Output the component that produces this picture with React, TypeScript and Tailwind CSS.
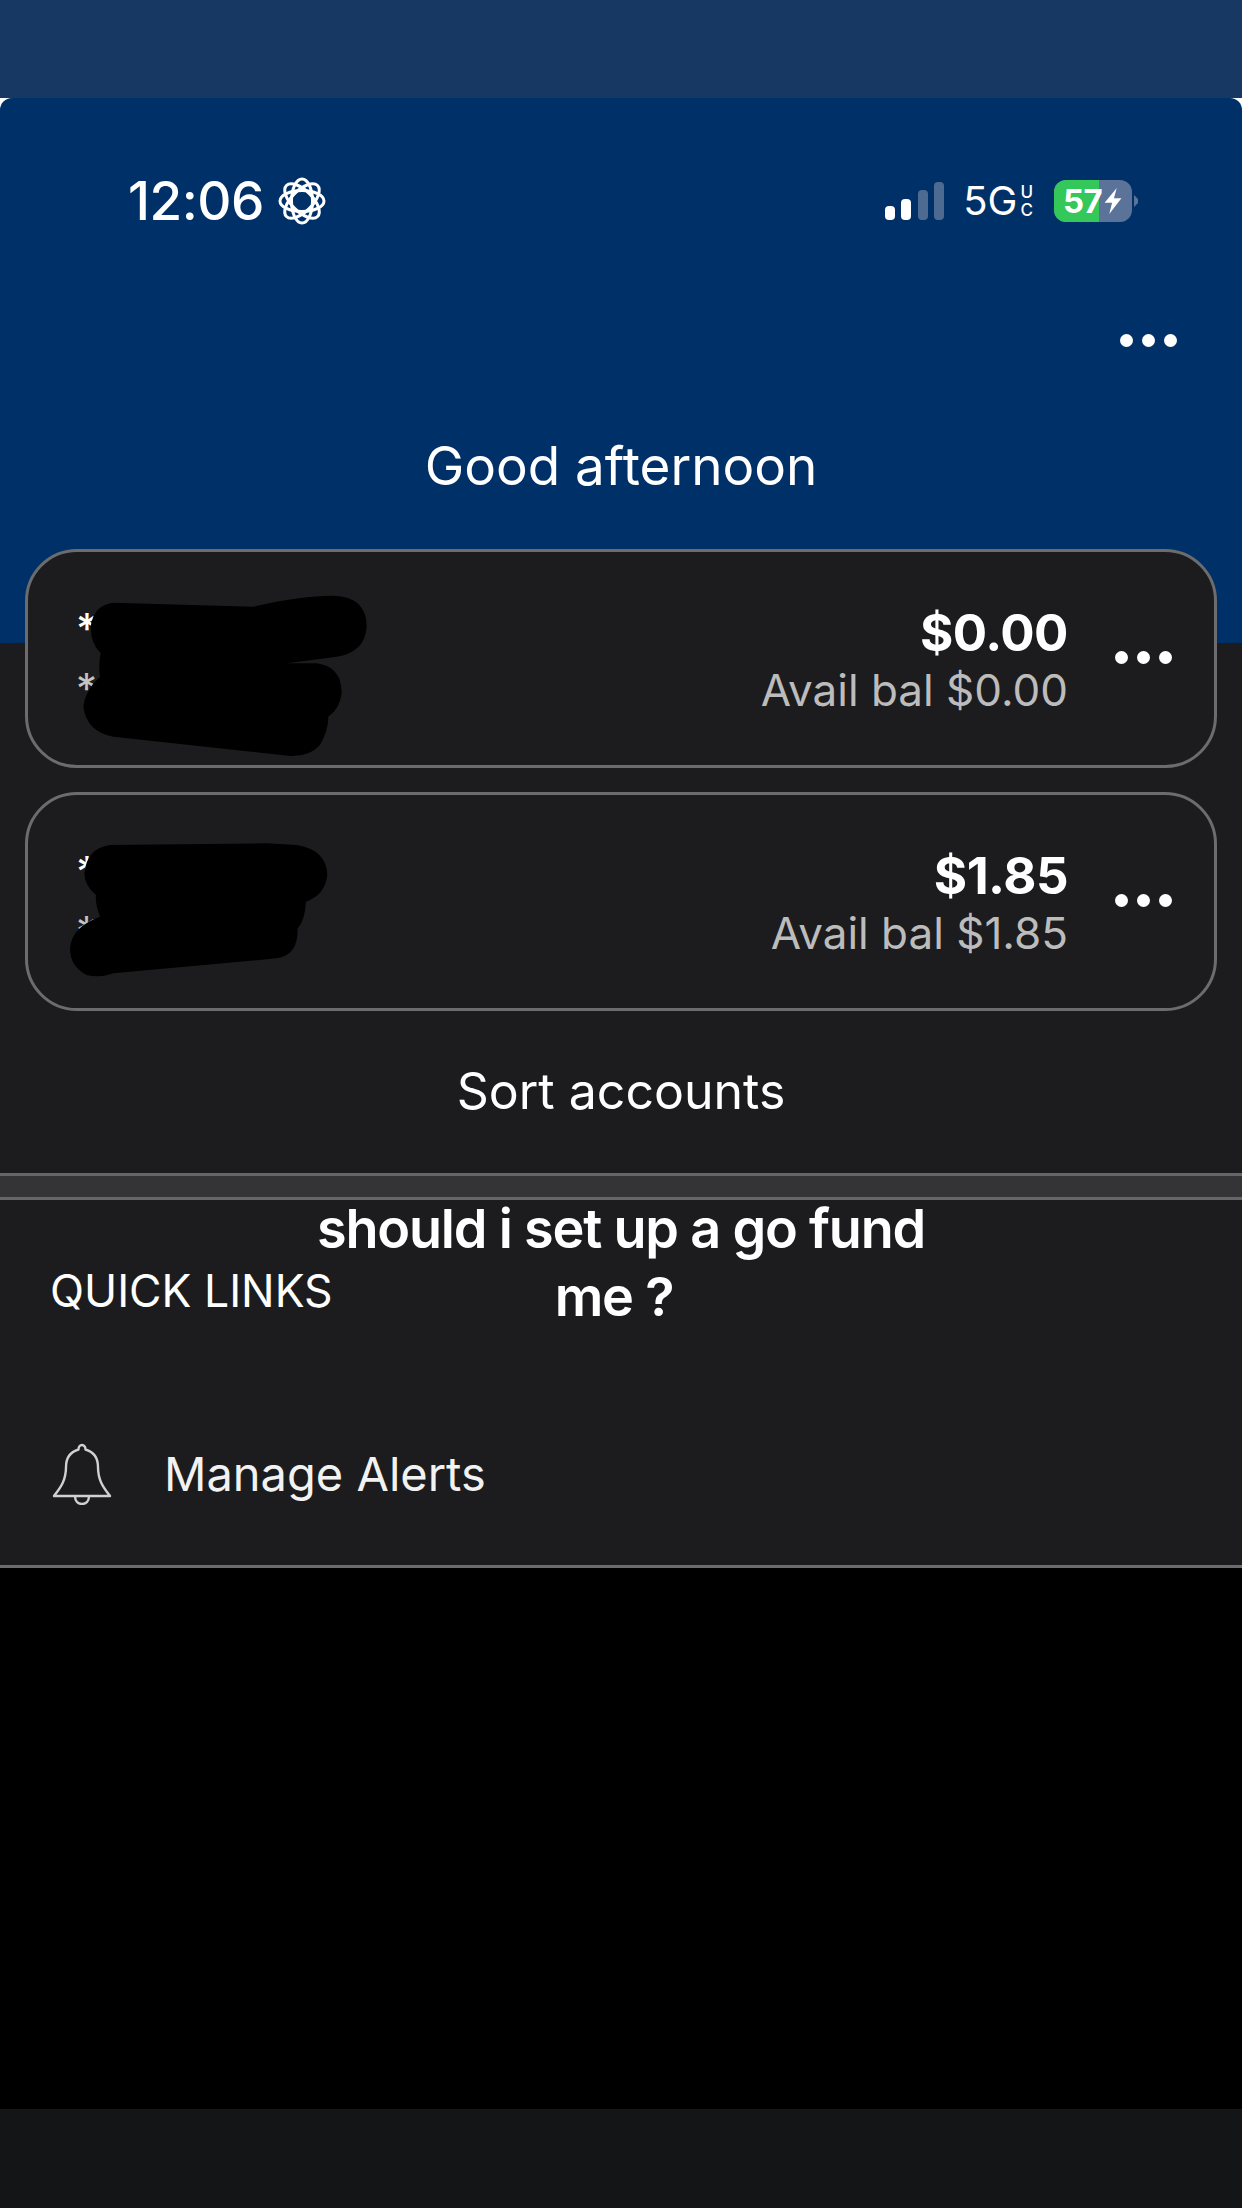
const dotClass = 'h-[13px] w-[13px] rounded-full bg-white';

function Dots() {
  return (
    <div className="flex items-center gap-[9px]">
      <span className={dotClass} />
      <span className={dotClass} />
      <span className={dotClass} />
    </div>
  );
}

function FocusIcon() {
  return (
    <svg viewBox="0 0 48 48" className="h-[48px] w-[48px]" fill="none" stroke="white" strokeWidth="3">
      <ellipse cx="24" cy="24" rx="22" ry="10.500" />
      <ellipse cx="24" cy="24" rx="22" ry="10.500" transform="rotate(45 24 24)" />
      <ellipse cx="24" cy="24" rx="22" ry="10.500" transform="rotate(90 24 24)" />
      <ellipse cx="24" cy="24" rx="22" ry="10.500" transform="rotate(135 24 24)" />
    </svg>
  );
}

function Signal() {
  return (
    <div className="flex items-end gap-[6.5px]">
      <span className="h-[14px] w-[10px] rounded-[4px] bg-white" />
      <span className="h-[21px] w-[10px] rounded-[4px] bg-white" />
      <span className="h-[30px] w-[10px] rounded-[4px] bg-[#4d6a91]" />
      <span className="h-[38px] w-[10px] rounded-[4px] bg-[#4d6a91]" />
    </div>
  );
}

function Battery() {
  return (
    <div className="flex items-center gap-[2px]">
      <div className="relative flex h-[42px] w-[78px] items-center overflow-hidden rounded-[12px] bg-[#5b7399]">
        <div className="absolute inset-y-0 left-0 w-[45px] bg-[#34c759]" />
        <span className="relative ml-[9px] text-[33px] leading-none font-bold tracking-[-0.5px] text-white">57</span>
        <svg viewBox="0 0 20 30" className="relative ml-[1px] h-[28px] w-[20px]" fill="white">
          <path d="M14 1 1 17h8l-3 12 13-17h-8z" />
        </svg>
      </div>
      <svg viewBox="0 0 4 12" className="h-[12px] w-[4px]" fill="#5b7399">
        <path d="M0 0 4 4v4L0 12Z" />
      </svg>
    </div>
  );
}

function StatusBar() {
  return (
    <div className="flex items-center justify-between pt-[75px] pr-[104px] pl-[128px]">
      <div className="flex items-center gap-[14px]">
        <span className="text-[53px] leading-[56px] font-medium tracking-[-0.5px] text-white">12:06</span>
        <FocusIcon />
      </div>
      <div className="flex items-center">
        <Signal />
        <span className="ml-[19px] text-[40px] leading-none text-white">5G</span>
        <span className="ml-[3px] flex flex-col text-[17px] leading-[18px] font-medium text-white">
          <span>U</span>
          <span>C</span>
        </span>
        <div className="ml-[21px]">
          <Battery />
        </div>
      </div>
    </div>
  );
}

interface AccountProps {
  amount: string;
  available: string;
}

function AccountCard({ amount, available }: AccountProps) {
  return (
    <div className="flex h-[219px] items-center rounded-[52px] border-[3px] border-[#6c6c6e] bg-[#1c1c1e] pr-[42px] pl-[48px]">
      <div className="flex flex-col gap-[20px] text-[42px] leading-[40px]">
        <span className="font-medium text-white">*</span>
        <span className="text-[#c4c4c4]">**</span>
      </div>
      <div className="mt-[5px] ml-auto flex flex-col items-end">
        <span className="text-[51px] leading-[58px] font-bold tracking-[-0.5px] text-white">{amount}</span>
        <span className="text-[44px] leading-[57px] text-[#bcbcbc]">{available}</span>
      </div>
      <div className="mt-[-2px] ml-[47px]">
        <Dots />
      </div>
    </div>
  );
}

function Scribbles() {
  return (
    <svg viewBox="0 0 1260 1500" className="absolute top-[530px] left-0 h-[500px] w-[420px]" fill="black">
      <path d="M340 218 L760 230 Q900 197 1000 197 Q1100 200 1100 290 Q1095 370 1000 382 L860 400 L950 400 Q1025 410 1025 490 Q1020 535 985 560 Q985 600 960 645 Q930 680 870 678 L340 620 Q260 605 250 530 Q255 480 300 440 Q295 400 302 370 Q272 340 272 290 Q280 225 340 218 Z" />
      <path d="M330 945 L800 940 L890 945 Q980 960 982 1035 Q975 1095 918 1115 Q915 1170 893 1195 Q895 1275 830 1285 L340 1330 Q300 1345 260 1335 Q210 1310 210 1255 Q215 1190 300 1160 Q285 1120 288 1095 Q255 1070 253 1030 Q260 955 330 945 Z" />
    </svg>
  );
}

export default function App() {
  return (
    <div className="relative flex h-[2208px] w-[1242px] flex-col overflow-hidden bg-[#1c1c1e] font-['Inter',sans-serif]">
      <div className="h-[98px] bg-[#163863]" />
      <div className="h-[545px] bg-white">
        <div className="h-full rounded-t-[12px] bg-[#003068]">
          <StatusBar />
          <div className="mt-[105px] flex justify-end pr-[65px]">
            <Dots />
          </div>
          <p className="mt-[87px] text-center text-[53px] leading-[64px] text-white">Good afternoon</p>
        </div>
      </div>

      <div className="mt-[-94px] flex flex-col gap-[24px] px-[25px]">
        <AccountCard amount="$0.00" available="Avail bal $0.00" />
        <AccountCard amount="$1.85" available="Avail bal $1.85" />
      </div>

      <p className="mt-[50px] text-center text-[50px] leading-[60px] text-white">Sort accounts</p>

      <div className="mt-[52px] h-[27px] border-y-[3px] border-[#666668] bg-[#343436]" />

      <p className="mt-[67px] pl-[50px] text-[44.500px] leading-[48px] text-white">QUICK LINKS</p>

      <div className="mt-[128px] flex items-center pl-[52px]">
        <svg viewBox="0 0 60 62" className="h-[62px] w-[60px]" fill="none" stroke="#d0d0d0" strokeWidth="2.4" strokeLinejoin="round">
          <path d="M30 2c-2 0-3.500 2-3.500 4.500C18 9 14 15 14 24c0 14-6 21-12 29h56c-6-8-12-15-12-29 0-9-4-15-12.500-17.500C33.500 4 32 2 30 2Z" />
          <path d="M23 53c0 5 3 8 7 8s7-3 7-8" />
        </svg>
        <span className="ml-[52px] text-[47px] leading-[56px] text-[#f2f2f2]">Manage Alerts</span>
      </div>

      <div className="mt-[60px] h-[3px] bg-[#6c6c6e]" />
      <div className="h-[541px] bg-black" />
      <div className="flex-1 bg-[#141516]" />

      <Scribbles />

      {/* caption sitting on top of the screenshot */}
      <p className="absolute top-[1195px] left-[300px] flex w-[642px] flex-col text-center text-[54px] leading-[68px] font-semibold tracking-[-1.2px] text-white">
        <span>should i set up a go fund</span>
        <span className="pr-[14px]">me ?</span>
      </p>
    </div>
  );
}
